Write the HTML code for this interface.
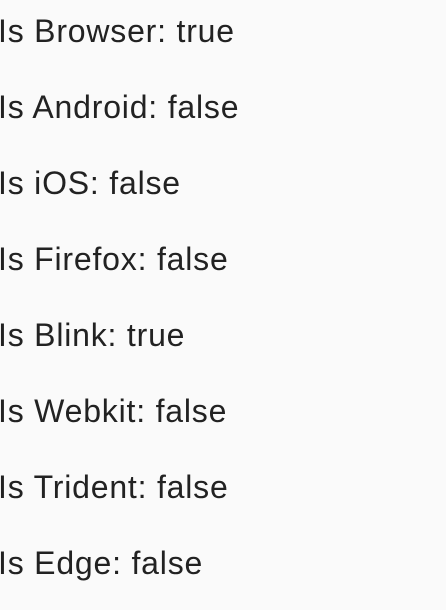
<!DOCTYPE html>
<html><head><meta charset="utf-8"><style>
html,body{margin:0;padding:0;background:#fafafa;width:446px;height:610px;overflow:hidden}
body{font-family:"Liberation Sans",sans-serif;font-size:32px;color:#222;letter-spacing:0.8px}
.w{position:absolute;left:-2px;top:-7px}
.w div{height:76px;line-height:76px;white-space:nowrap}
</style></head><body><div class="w">
<div>Is Browser: true</div>
<div>Is Android: false</div>
<div>Is iOS: false</div>
<div>Is Firefox: false</div>
<div>Is Blink: true</div>
<div>Is Webkit: false</div>
<div>Is Trident: false</div>
<div>Is Edge: false</div>
</div></body></html>
